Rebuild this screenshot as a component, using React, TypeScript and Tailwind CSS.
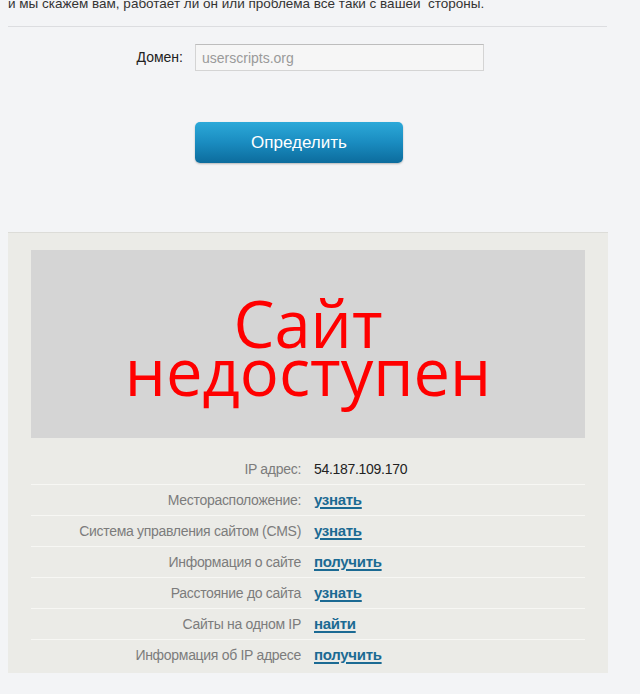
import React from "react";

const rows: { label: string; value: string; link?: boolean }[] = [
  { label: "IP адрес:", value: "54.187.109.170" },
  { label: "Месторасположение:", value: "узнать", link: true },
  { label: "Система управления сайтом (CMS)", value: "узнать", link: true },
  { label: "Информация о сайте", value: "получить", link: true },
  { label: "Расстояние до сайта", value: "узнать", link: true },
  { label: "Сайты на одном IP", value: "найти", link: true },
  { label: "Информация об IP адресе", value: "получить", link: true },
];

export default function App() {
  return (
    <div className="min-h-[694px] overflow-hidden bg-[#f3f4f6] font-['Liberation_Sans',Arial,sans-serif]">
      <div className="w-[600px] pl-2">
        <p className="-mt-[5px] text-[13.5px] leading-[18px] text-[#333]">
          и мы скажем вам, работает ли он или проблема все таки с вашей&nbsp; стороны.
        </p>
        <div className="mt-[13px] h-px w-[599px] bg-[#dcdde0]" />

        <div className="mt-[17px] flex items-center">
          <label className="w-[182px] pr-[7px] text-right text-[14px] text-[#222]">Домен:</label>
          <input
            className="ml-[5px] h-[27px] w-[289px] border border-[#d4d4d4] border-t-[#bdbdbd] bg-[#f6f6f6] px-[6px] text-[14px] text-[#333] outline-none placeholder:text-[#9a9a9a]"
            placeholder="userscripts.org"
          />
        </div>

        <div className="mt-[51px] pl-[187px]">
          <button className="h-[41px] w-[208px] rounded-[5px] bg-gradient-to-b from-[#2ca9d9] via-[#1a8cc0] to-[#0c6c9d] text-[17px] text-white shadow-[0_1px_2px_rgba(0,0,0,0.25)]">
            Определить
          </button>
        </div>

        <div className="mt-[69px] h-[441px] w-[600px] border-t border-[#dcdcd8] bg-[#ebebe7] px-[23px] pt-[17px]">
          <div className="flex h-[188px] flex-col items-center justify-center bg-[#d5d5d5] pt-[6px] font-['Open_Sans',sans-serif] text-[65px] leading-[48px] text-[#ff0000]">
            <span>Сайт</span>
            <span>недоступен</span>
          </div>

          <div className="mt-[16px]">
            {rows.map((r, i) => (
              <div
                key={r.label}
                className={
                  "flex h-[31px] items-center " +
                  (i < rows.length - 1 ? "border-b border-[#f7f7f4]" : "")
                }
              >
                <span className="w-[270px] text-right text-[14px] tracking-[-0.3px] text-[#7c7c7c]">
                  {r.label}
                </span>
                {r.link ? (
                  <a href="#" className="ml-[13px] text-[15px] font-bold tracking-[-0.3px] text-[#1b6a93] underline decoration-2 underline-offset-2">
                    {r.value}
                  </a>
                ) : (
                  <span className="ml-[13px] text-[14px] tracking-[-0.3px] text-[#222]">{r.value}</span>
                )}
              </div>
            ))}
          </div>
        </div>
      </div>
    </div>
  );
}
